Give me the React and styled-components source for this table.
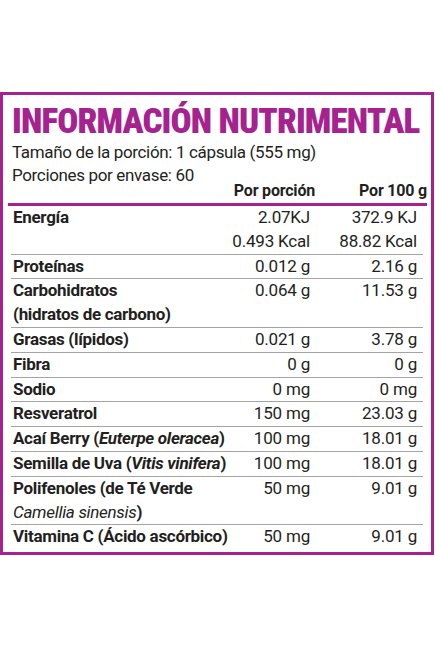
import styled, { createGlobalStyle } from 'styled-components';

const GlobalStyle = createGlobalStyle`
    html, body {
        margin: 0;
        padding: 0;
        background: #ffffff;
    }
    body {
        font-family: "Roboto", "Liberation Sans", sans-serif;
        color: #231f20;
    }
`;

const MAGENTA = '#a5228f';

const Page = styled.div`
    width: 435px;
    height: 647px;
    padding-top: 92px;
    box-sizing: border-box;
`;

const Panel = styled.section`
    width: 434px;
    box-sizing: border-box;
    border: 3px solid ${MAGENTA};
    padding: 0 4px 3px 5px;
`;

const Title = styled.h1`
    margin: 0;
    padding: 8px 0 0 4px;
    font-size: 35px;
    line-height: 38px;
    font-weight: 900;
    font-stretch: 75%;
    letter-spacing: -0.85px;
    color: ${MAGENTA};
    white-space: nowrap;
`;

const Info = styled.div`
    padding: 0 0 0 4px;
    font-size: 17px;
    line-height: 22.5px;
    letter-spacing: -0.35px;
`;

const Table = styled.div`
    padding: 0 0 0 3px;
`;

const HeadRow = styled.div`
    display: grid;
    grid-template-columns: minmax(0, 1fr) 100px 112px;
    font-size: 16px;
    font-weight: 700;
    line-height: 20px;
    letter-spacing: -0.2px;
    margin-top: -5px;
    border-bottom: 3px solid ${MAGENTA};
    padding-bottom: 2px;
`;

const HeadCell = styled.div`
    text-align: right;
    padding-right: ${({ $pad }) => $pad || 0}px;
    white-space: nowrap;
`;

const Row = styled.div`
    display: grid;
    grid-template-columns: minmax(0, 1fr) 100px 112px;
    font-size: 17px;
    line-height: 23.8px;
    margin-right: 4px;
    border-top: ${({ $first }) => ($first ? 'none' : '1px solid #a3a3a3')};
`;

const Label = styled.div`
    font-weight: 700;
    padding-left: 2px;
    letter-spacing: -0.3px;
    white-space: nowrap;
`;

const Value = styled.div`
    text-align: right;
    padding-right: ${({ $pad }) => $pad || 0}px;
    letter-spacing: -0.2px;
    white-space: nowrap;
`;

const Sci = styled.i`
    font-weight: ${({ $light }) => ($light ? 400 : 700)};
`;

const rows = [
    { label: 'Energía', a: ['2.07KJ', '0.493 Kcal'], b: ['372.9 KJ', '88.82 Kcal'] },
    { label: 'Proteínas', a: ['0.012 g'], b: ['2.16 g'] },
    { label: <>Carbohidratos<br />(hidratos de carbono)</>, a: ['0.064 g'], b: ['11.53 g'] },
    { label: 'Grasas (lípidos)', a: ['0.021 g'], b: ['3.78 g'] },
    { label: 'Fibra', a: ['0 g'], b: ['0 g'] },
    { label: 'Sodio', a: ['0 mg'], b: ['0 mg'] },
    { label: 'Resveratrol', a: ['150 mg'], b: ['23.03 g'] },
    { label: <>Acaí Berry (<Sci>Euterpe oleracea</Sci>)</>, a: ['100 mg'], b: ['18.01 g'] },
    { label: <>Semilla de Uva (<Sci>Vitis vinifera</Sci>)</>, a: ['100 mg'], b: ['18.01 g'] },
    { label: <>Polifenoles (de Té Verde<br /><Sci $light>Camellia sinensis</Sci>)</>, a: ['50 mg'], b: ['9.01 g'] },
    { label: 'Vitamina C (Ácido ascórbico)', a: ['50 mg'], b: ['9.01 g'] },
];

export default function App() {
    return (
        <Page>
            <GlobalStyle />
            <Panel>
                <Title>INFORMACIÓN NUTRIMENTAL</Title>
                <Info>
                    Tamaño de la porción: 1 cápsula (555 mg)<br />
                    Porciones por envase: 60
                </Info>
                <HeadRow>
                    <div />
                    <HeadCell $pad={0}>Por porción</HeadCell>
                    <HeadCell $pad={0}>Por 100 g</HeadCell>
                </HeadRow>
                <Table>
                    {rows.map((row, index) => (
                        <Row key={index} $first={index === 0}>
                            <Label>{row.label}</Label>
                            <Value $pad={1}>
                                {row.a.map((v, i) => <div key={i}>{v}</div>)}
                            </Value>
                            <Value $pad={6}>
                                {row.b.map((v, i) => <div key={i}>{v}</div>)}
                            </Value>
                        </Row>
                    ))}
                </Table>
            </Panel>
        </Page>
    );
}
